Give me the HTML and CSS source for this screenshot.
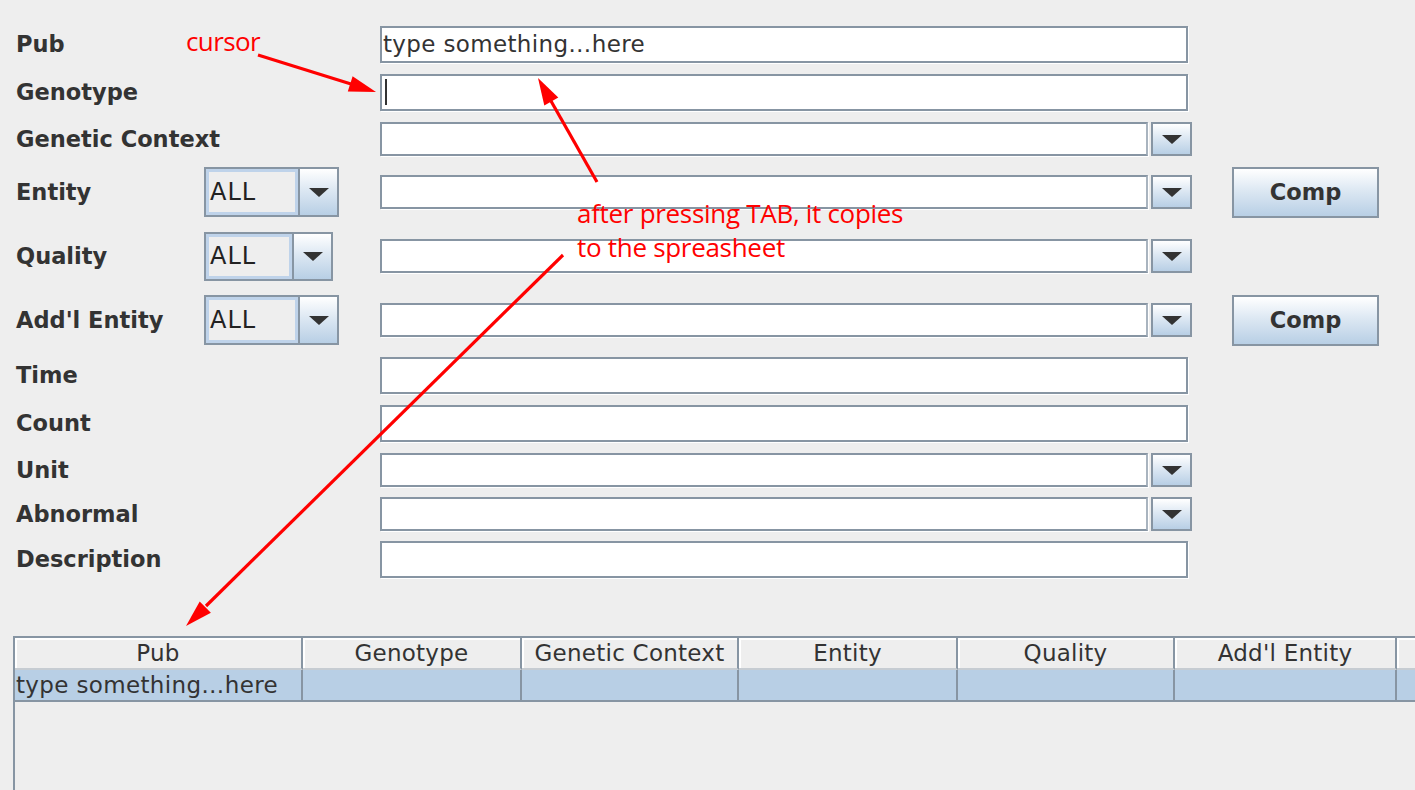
FILE: index.html
```html
<!DOCTYPE html>
<html>
<head>
<meta charset="utf-8">
<title>Phenote form</title>
<link rel="stylesheet" href="styles.css">
</head>
<body>
<div class="form">
  <div class="row h48">
    <span class="lbl">Pub</span><span></span>
    <div class="tf">type something…here</div>
  </div>
  <div class="row h48">
    <span class="lbl">Genotype</span><span></span>
    <div class="tf"><span class="caret"></span></div>
  </div>
  <div class="row h46">
    <span class="lbl">Genetic Context</span><span></span>
    <div class="combo"><div class="cf"></div><div class="cb"><i class="tri"></i></div></div>
  </div>
  <div class="row h60">
    <span class="lbl">Entity</span>
    <div class="mini"><div class="mf">ALL</div><div class="mb"><i class="tri"></i></div></div>
    <div class="combo"><div class="cf"></div><div class="cb"><i class="tri"></i></div></div>
    <button class="comp">Comp</button>
  </div>
  <div class="row h68">
    <span class="lbl">Quality</span>
    <div class="mini narrow"><div class="mf">ALL</div><div class="mb"><i class="tri"></i></div></div>
    <div class="combo"><div class="cf"></div><div class="cb"><i class="tri"></i></div></div>
  </div>
  <div class="row h60">
    <span class="lbl">Add'l Entity</span>
    <div class="mini"><div class="mf">ALL</div><div class="mb"><i class="tri"></i></div></div>
    <div class="combo"><div class="cf"></div><div class="cb"><i class="tri"></i></div></div>
    <button class="comp">Comp</button>
  </div>
  <div class="row h50">
    <span class="lbl">Time</span><span></span>
    <div class="tf"></div>
  </div>
  <div class="row h46">
    <span class="lbl">Count</span><span></span>
    <div class="tf"></div>
  </div>
  <div class="row h48">
    <span class="lbl">Unit</span><span></span>
    <div class="combo"><div class="cf"></div><div class="cb"><i class="tri"></i></div></div>
  </div>
  <div class="row h40">
    <span class="lbl">Abnormal</span><span></span>
    <div class="combo"><div class="cf"></div><div class="cb"><i class="tri"></i></div></div>
  </div>
  <div class="row h50">
    <span class="lbl">Description</span><span></span>
    <div class="tf"></div>
  </div>
</div>

<div class="tpane">
  <table class="grid">
    <colgroup>
      <col class="c1"><col class="c2"><col class="c3"><col class="c4"><col class="c5"><col class="c6"><col class="c7">
    </colgroup>
    <thead>
      <tr><th>Pub</th><th>Genotype</th><th>Genetic Context</th><th>Entity</th><th>Quality</th><th>Add'l Entity</th><th></th></tr>
    </thead>
    <tbody>
      <tr><td>type something…here</td><td></td><td></td><td></td><td></td><td></td><td></td></tr>
    </tbody>
  </table>
</div>

<div class="note note-cursor">cursor</div>
<div class="note note-tab">after pressing TAB, it copies<br>to the spreasheet</div>
<svg class="arrows" width="1415" height="790" viewBox="0 0 1415 790">
  <g stroke="#ff0000" stroke-width="3.2" fill="none" stroke-linecap="butt">
    <line x1="258" y1="55" x2="351" y2="84"/>
    <line x1="597" y1="182" x2="551" y2="101"/>
    <line x1="563" y1="255" x2="206" y2="606"/>
  </g>
  <g fill="#ff0000">
    <polygon points="376,92 347.8,91.5 352.6,76.3"/>
    <polygon points="538,78 558.3,97.6 544.3,105.4"/>
    <polygon points="186,626 210.9,612.8 199.7,601.4"/>
  </g>
</svg>
</body>
</html>
```

FILE: styles.css
```css
html, body {
  margin: 0;
  padding: 0;
  background: #eeeeee;
  overflow: hidden;
}
body {
  width: 1415px;
  height: 790px;
  position: relative;
  font-family: "DejaVu Sans", "Liberation Sans", sans-serif;
  color: #333333;
}

.form {
  padding: 20px 0 0 16px;
}
.row {
  display: grid;
  grid-template-columns: 188px 176px 851px 147px;
  align-items: center;
}
.h40 { height: 40px; }
.h46 { height: 46px; }
.h48 { height: 48px; }
.h50 { height: 50px; }
.h60 { height: 60px; }
.h68 { height: 68px; }

.lbl {
  font-weight: bold;
  font-size: 22.5px;
  white-space: nowrap;
  line-height: 1;
}

/* text fields */
.tf {
  width: 808px;
  height: 37px;
  box-sizing: border-box;
  background: #ffffff;
  border: 2px solid #8795a3;
  box-shadow: 1px 1px 0 #ffffff;
  font-size: 23px;
  letter-spacing: 0.35px;
  line-height: 31px;
  padding: 0 0 0 1px;
  display: flex;
  align-items: center;
  white-space: nowrap;
}
.caret {
  display: block;
  width: 2px;
  height: 26px;
  margin-left: 2px;
  background: #333333;
}

/* wide combo boxes */
.combo {
  display: flex;
  width: 812px;
  height: 34px;
  gap: 3px;
}
.cf {
  flex: 1;
  background: #ffffff;
  border: 2px solid #8795a3;
  border-right-color: #a9b4bf;
  box-shadow: 1px 1px 0 #ffffff;
}
.cb {
  width: 41px;
  box-sizing: border-box;
  border: 2px solid #8795a3;
  background: linear-gradient(#ffffff, #dde8f3 45%, #b8cfe5);
  display: flex;
  align-items: center;
  justify-content: center;
}
.tri {
  display: block;
  width: 0;
  height: 0;
  border-left: 10px solid transparent;
  border-right: 10px solid transparent;
  border-top: 9px solid #333333;
}

/* ALL selector */
.mini {
  display: flex;
  width: 135px;
  height: 50px;
  box-sizing: border-box;
  border: 2px solid #8795a3;
}
.mini.narrow {
  width: 129px;
  height: 49px;
}
.mf {
  flex: 1;
  box-sizing: border-box;
  border: 3px solid #bfd3ea;
  background: #eeeeee;
  font-size: 24px;
  letter-spacing: 1px;
  display: flex;
  align-items: center;
  padding-left: 1px;
  color: #222222;
}
.mb {
  width: 39px;
  box-sizing: border-box;
  border-left: 2px solid #8795a3;
  background: linear-gradient(#ffffff, #dde8f3 45%, #b8cfe5);
  display: flex;
  align-items: center;
  justify-content: center;
}

.comp {
  width: 147px;
  height: 51px;
  box-sizing: border-box;
  border: 2px solid #8795a3;
  background: linear-gradient(#ffffff, #dde8f3 45%, #b8cfe5);
  font-family: "DejaVu Sans", sans-serif;
  font-weight: bold;
  font-size: 22.5px;
  color: #333333;
  padding: 0;
  margin-left: 1px;
}

/* spreadsheet */
.tpane {
  margin: 52px 0 0 13px;
  height: 154px;
  box-sizing: border-box;
  border-left: 2px solid #8795a3;
  border-top: 2px solid #8795a3;
  overflow: hidden;
}
.grid {
  border-collapse: separate;
  border-spacing: 0;
  table-layout: fixed;
  width: 1582px;
  font-size: 23px;
  letter-spacing: 0.25px;
  color: #333333;
}
.c1 { width: 288px; }
.c2 { width: 219px; }
.c3 { width: 217px; }
.c4 { width: 219px; }
.c5 { width: 217px; }
.c6 { width: 222px; }
.c7 { width: 200px; }
.grid th {
  height: 30px;
  padding: 0;
  font-weight: normal;
  background: #eeeeee;
  border-right: 2px solid #8795a3;
  border-bottom: 2px solid #c6ccd2;
  box-shadow: inset 2px 2px 0 #ffffff;
  white-space: nowrap;
  line-height: 30px;
}
.grid td {
  height: 30px;
  padding: 0 0 0 1px;
  background: #b8cfe5;
  border-right: 2px solid #8795a3;
  border-bottom: 2px solid #8795a3;
  white-space: nowrap;
  overflow: hidden;
  line-height: 30px;
  letter-spacing: 0.35px;
}

/* annotations */
.note {
  position: absolute;
  color: #ff0000;
  font-family: "Open Sans", "Liberation Sans", sans-serif;
  white-space: nowrap;
}
.note-cursor {
  left: 186px;
  top: 28px;
  font-size: 26px;
  line-height: 1;
  letter-spacing: -0.6px;
}
.note-tab {
  left: 577px;
  top: 196px;
  font-size: 26px;
  line-height: 34px;
  letter-spacing: -0.3px;
}
.arrows {
  position: absolute;
  left: 0;
  top: 0;
  pointer-events: none;
}
```
